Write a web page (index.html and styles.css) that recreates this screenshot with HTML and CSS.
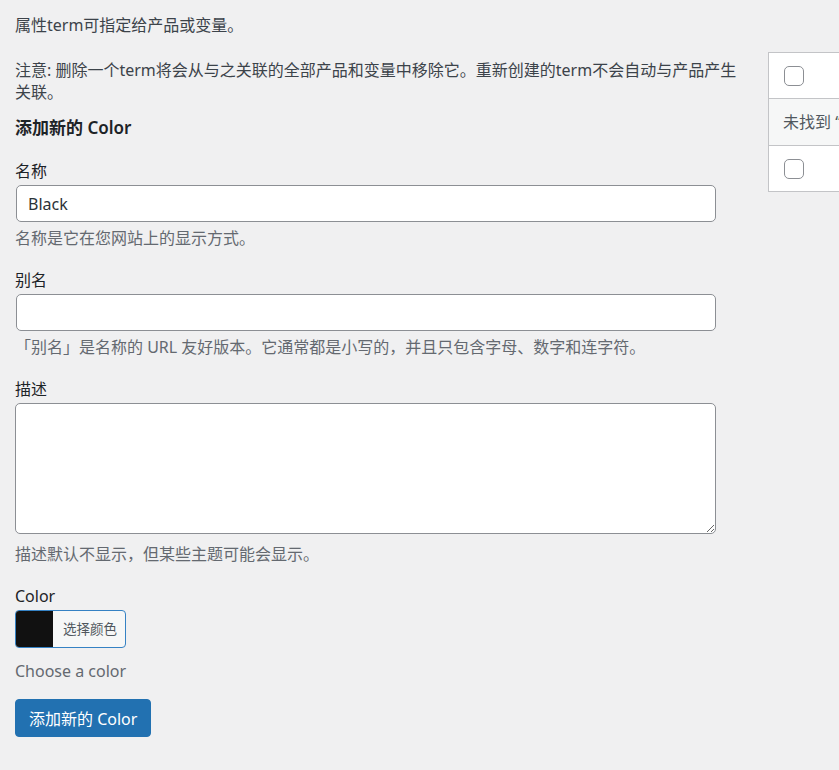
FILE: index.html
```html
<!DOCTYPE html>
<html lang="zh-CN">
<head>
	<meta charset="UTF-8">
	<title>Color 属性项</title>
	<link rel="stylesheet" href="styles.css">
</head>
<body>
	<div class="col-container">
		<div class="col-left">
			<p class="intro">属性term可指定给产品或变量。</p>
			<p class="note">注意: 删除一个term将会从与之关联的全部产品和变量中移除它。重新创建的term不会自动与产品产生关联。</p>

			<form class="form-wrap" action="">
				<h2>添加新的 Color</h2>

				<div class="form-field">
					<label for="tag-name">名称</label>
					<input type="text" id="tag-name" class="f-text" value="Black">
					<p class="description">名称是它在您网站上的显示方式。</p>
				</div>

				<div class="form-field">
					<label for="tag-slug">别名</label>
					<input type="text" id="tag-slug" class="f-text" value="">
					<p class="description">「别名」是名称的 URL 友好版本。它通常都是小写的，并且只包含字母、数字和连字符。</p>
				</div>

				<div class="form-field">
					<label for="tag-description">描述</label>
					<textarea id="tag-description" class="f-text"></textarea>
					<p class="description description-area">描述默认不显示，但某些主题可能会显示。</p>
				</div>

				<div class="form-field">
					<label>Color</label>
					<button type="button" class="color-result">
						<span class="swatch"></span>
						<span class="color-text">选择颜色</span>
					</button>
					<p class="description description-color">Choose a color</p>
				</div>

				<p class="submit"><input type="button" class="button-primary" value="添加新的 Color"></p>
			</form>
		</div>

		<div class="col-right">
			<table class="list-table">
				<tr><td><input type="checkbox" class="cb"></td></tr>
				<tr class="no-items"><td>未找到 “Color” 项目。</td></tr>
				<tr><td><input type="checkbox" class="cb"></td></tr>
			</table>
		</div>
	</div>
</body>
</html>
```

FILE: styles.css
```css
/*reset*/
*{
	margin: 0;
	padding: 0;
	box-sizing: border-box;
}
html, body{
	overflow: hidden;
}
body{
	background-color: #f0f0f1;
	color: #3c434a;
	font-family: "Noto Sans", "Noto Sans CJK SC", sans-serif;
	font-size: 16px;
	line-height: 22px;
}
/*columns*/
.col-container{
	display: flex;
	gap: 23px;
	width: 1200px;
	padding: 14px 0 0 15px;
}
.col-left{
	flex: 0 0 730px;
}
.col-right{
	flex: 0 0 420px;
	padding-top: 38px;
}
/*text*/
.note{
	margin-top: 23px;
}
.form-wrap h2{
	margin-top: 13px;
	color: #1d2327;
	font-size: 17px;
	font-weight: 600;
	line-height: 24px;
}
/*fields*/
.form-field{
	margin-top: 20px;
}
.form-field label{
	display: block;
	margin-bottom: 3px;
	color: #1d2327;
}
.f-text{
	display: block;
	width: 700px;
	height: 37px;
	padding: 0 11px;
	border: 1px solid #8c8f94;
	border-radius: 5px;
	background-color: #fff;
	color: #2c3338;
	font-family: inherit;
	font-size: 16px;
	margin-left: 1px;
}
textarea.f-text{
	width: 701px;
	height: 131px;
	margin-left: 0;
	padding: 6px 10px;
	resize: vertical;
}
.description{
	margin-top: 5px;
	color: #646970;
}
.description-area{
	margin-top: 9px;
}
.description-color{
	margin-top: 12px;
}
/*color picker*/
.color-result{
	display: flex;
	width: 111px;
	height: 38px;
	border: 1px solid #3582c4;
	border-radius: 4px;
	overflow: hidden;
	background-color: #f6f7f7;
	cursor: pointer;
	font-family: inherit;
}
.swatch{
	width: 37px;
	height: 100%;
	background-color: #111;
}
.color-text{
	flex: 1;
	padding-left: 10px;
	color: #50575e;
	font-size: 13.5px;
	line-height: 36px;
	text-align: left;
}
/*submit*/
.submit{
	margin-top: 17px;
}
.button-primary{
	height: 38px;
	padding: 0 13px;
	border: 1px solid #2271b1;
	border-radius: 4px;
	background-color: #2271b1;
	color: #fff;
	font-family: inherit;
	font-size: 16px;
	cursor: pointer;
}
/*table*/
.list-table{
	width: 420px;
	border: 1px solid #c3c4c7;
	border-collapse: collapse;
	background-color: #fff;
}
.list-table td{
	height: 46px;
	padding: 0 15px;
	border-top: 1px solid #c3c4c7;
	color: #50575e;
	vertical-align: middle;
}
.list-table .no-items td{
	height: 47px;
	background-color: #f6f7f7;
	padding-left: 14px;
}
.cb{
	display: block;
	width: 20px;
	height: 20px;
	border: 1px solid #8c8f94;
	border-radius: 5px;
	background-color: #fff;
	appearance: none;
}
```
